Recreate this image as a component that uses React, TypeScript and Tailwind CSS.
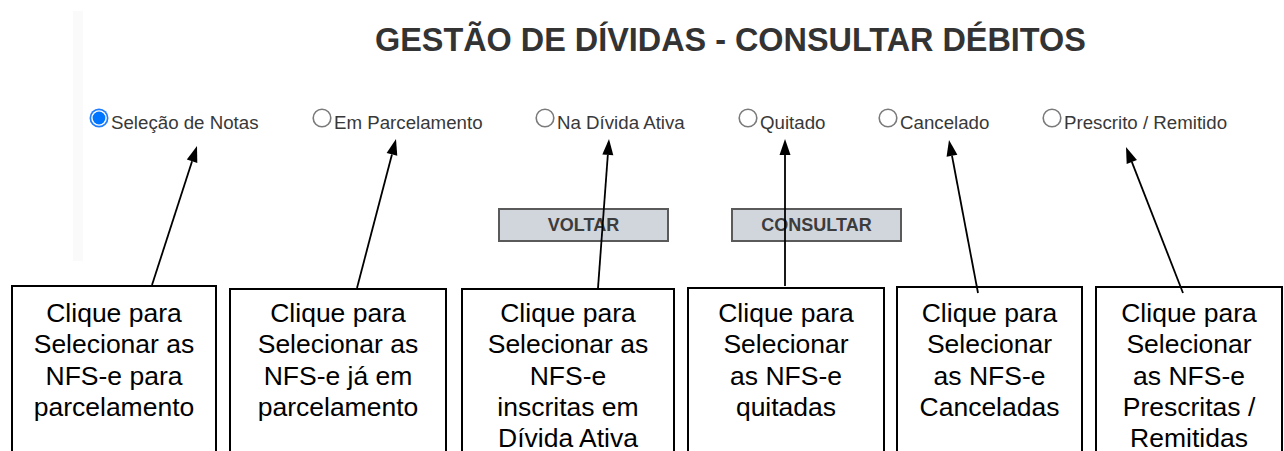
const options = [
  { label: 'Seleção de Notas', width: 'w-[223px]', checked: true },
  { label: 'Em Parcelamento', width: 'w-[223px]', checked: false },
  { label: 'Na Dívida Ativa', width: 'w-[203px]', checked: false },
  { label: 'Quitado', width: 'w-[140px]', checked: false },
  { label: 'Cancelado', width: 'w-[164px]', checked: false },
  { label: 'Prescrito / Remitido', width: 'w-[200px]', checked: false },
];

const notes = [
  { box: 'ml-[11px] w-[206px] mt-0 pt-[11px]', lines: ['Clique para', 'Selecionar as', 'NFS-e para', 'parcelamento'] },
  { box: 'ml-[12px] w-[218px] mt-[3px] pt-[8px]', lines: ['Clique para', 'Selecionar as', 'NFS-e já em', 'parcelamento'] },
  { box: 'ml-[14px] w-[214px] mt-[3px] pt-[8px]', lines: ['Clique para', 'Selecionar as', 'NFS-e', 'inscritas em', 'Dívida Ativa'] },
  { box: 'ml-[12px] w-[198px] mt-[2px] pt-[9px]', lines: ['Clique para', 'Selecionar', 'as NFS-e', 'quitadas'] },
  { box: 'ml-[11px] w-[187px] mt-[1px] pt-[10px]', lines: ['Clique para', 'Selecionar', 'as NFS-e', 'Canceladas'] },
  { box: 'ml-[12px] w-[188px] mt-[1px] pt-[10px]', lines: ['Clique para', 'Selecionar', 'as NFS-e', 'Prescritas /', 'Remitidas'] },
];

// [tailX, tailY, tipX, tipY]
const arrows = [
  [152, 285, 197, 146],
  [357, 288, 396, 139],
  [598, 288, 609, 139],
  [785, 286, 785, 139],
  [978, 293, 949, 140],
  [1183, 293, 1126, 147],
];

function Radio({ checked }: { checked: boolean }) {
  if (checked) {
    return (
      <svg width="20" height="20" viewBox="0 0 20 20" className="shrink-0">
        <circle cx="10" cy="10" r="9.5" fill="#1f7dff" />
        <circle cx="10" cy="10" r="7.8" fill="#ffffff" />
        <circle cx="10" cy="10" r="6.4" fill="#0075ff" />
      </svg>
    );
  }
  return (
    <svg width="20" height="20" viewBox="0 0 20 20" className="shrink-0">
      <circle cx="10" cy="10" r="8.8" fill="#ffffff" stroke="#7a7a7a" strokeWidth="1.6" />
    </svg>
  );
}

function Arrow({ a }: { a: number[] }) {
  const [x1, y1, x2, y2] = a;
  const dx = x2 - x1;
  const dy = y2 - y1;
  const len = Math.sqrt(dx * dx + dy * dy);
  const ux = dx / len;
  const uy = dy / len;
  const bx = x2 - ux * 16;
  const by = y2 - uy * 16;
  const px = -uy * 5.5;
  const py = ux * 5.5;
  return (
    <g>
      <line x1={x1} y1={y1} x2={bx} y2={by} stroke="#000" strokeWidth="1.8" />
      <polygon points={`${x2},${y2} ${bx + px},${by + py} ${bx - px},${by - py}`} fill="#000" />
    </g>
  );
}

export default function App() {
  return (
    <div className="relative w-[1284px] h-[451px] overflow-hidden bg-white font-['Liberation_Sans',Arial,sans-serif]">
      <div className="pt-[11px] pl-[73px]">
        <div className="h-[250px] border-l-[10px] border-[#fafafa] flex flex-col">
          <h1 className="mt-[11px] pl-[292px] text-[32.4px] leading-[36px] font-bold text-[#333] whitespace-nowrap">
            GESTÃO DE DÍVIDAS - CONSULTAR DÉBITOS
          </h1>

          <div className="mt-[50px] pl-[6px] flex items-start">
            {options.map((o) => (
              <label key={o.label} className={`${o.width} flex items-start shrink-0`}>
                <Radio checked={o.checked} />
                <span className="ml-[2px] mt-[4px] text-[18.7px] leading-[22px] text-[#383838] whitespace-nowrap">
                  {o.label}
                </span>
              </label>
            ))}
          </div>

          <div className="mt-[74px] pl-[415px] flex gap-[62px]">
            <button className="w-[171px] h-[34px] border-2 border-[#5a5a5a] bg-[#d1d6dd] text-[18px] font-bold text-[#3c3c3c]">
              VOLTAR
            </button>
            <button className="w-[171px] h-[34px] border-2 border-[#5a5a5a] bg-[#d1d6dd] text-[18px] font-bold text-[#3c3c3c]">
              CONSULTAR
            </button>
          </div>
        </div>
      </div>

      <div className="mt-[24px] flex items-start">
        {notes.map((n, i) => (
          <div
            key={i}
            className={`${n.box} shrink-0 h-[200px] border-2 border-black text-center text-[26.5px] leading-[31.25px] text-black`}
          >
            {n.lines.map((l) => (
              <div key={l} className="whitespace-nowrap">{l}</div>
            ))}
          </div>
        ))}
      </div>

      <svg className="absolute inset-0 pointer-events-none" width="1284" height="451">
        {arrows.map((a, i) => (
          <Arrow key={i} a={a} />
        ))}
      </svg>
    </div>
  );
}
